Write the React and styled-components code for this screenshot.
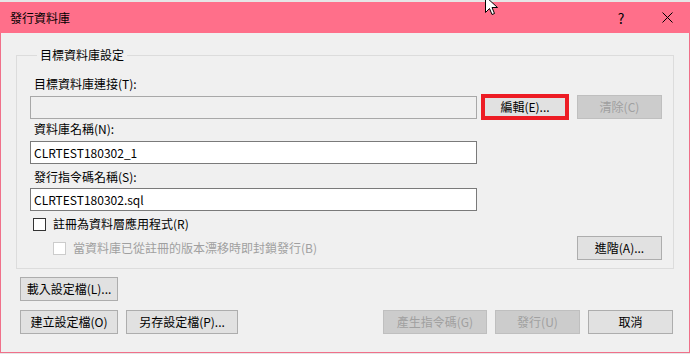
import React from 'react';
import styled, { createGlobalStyle } from 'styled-components';

const GlobalStyle = createGlobalStyle`
  html, body {
    margin: 0;
    padding: 0;
    background: #e6e6e6;
  }
  body {
    font-family: 'Noto Sans CJK TC', 'Noto Sans', sans-serif;
    font-size: 12px;
    color: #000;
  }
`;

const Window = styled.div`
  position: relative;
  margin-top: 2px;
  width: 688px;
  height: 350px;
  border: 1px solid #f0708a;
  border-top: none;
  background: #f0f0f0;
  display: flex;
  flex-direction: column;
`;

const TitleBar = styled.div`
  height: 31px;
  margin: 0 -1px;
  background: #ff6f8a;
  display: flex;
  align-items: center;
  padding-left: 10px;
  line-height: 16px;
`;

const Title = styled.span`
  flex: 1;
`;

const TitleButton = styled.div`
  width: 46px;
  height: 31px;
  display: flex;
  align-items: center;
  justify-content: center;
  font-size: 14px;
`;

const Body = styled.div`
  flex: 1;
  padding: 0 15px;
  display: flex;
  flex-direction: column;
`;

const Group = styled.fieldset`
  margin: 14px 0 0;
  padding: 13px 11px 8px 13px;
  border: 1px solid #dcdcdc;
  display: flex;
  flex-direction: column;
`;

const Legend = styled.legend`
  margin-left: 7px;
  padding: 0 3px;
  line-height: 16px;
`;

const Label = styled.div`
  margin: ${(p) => p.$top || 0}px 0 0 4px;
  line-height: 16px;
  height: 16px;
`;

const Row = styled.div`
  display: flex;
  align-items: center;
  gap: ${(p) => p.$gap || 0}px;
  margin-top: ${(p) => p.$top || 0}px;
`;

const TextBox = styled.div`
  box-sizing: border-box;
  width: 447px;
  height: 23px;
  margin-top: ${(p) => p.$top || 0}px;
  border: 1px solid ${(p) => (p.$disabled ? '#a8a8a8' : '#7a7a7a')};
  background: ${(p) => (p.$disabled ? '#f0f0f0' : '#fff')};
  padding-left: 3px;
  line-height: 21px;
`;

const Button = styled.button`
  box-sizing: border-box;
  width: ${(p) => p.$w}px;
  height: 24px;
  padding: 0;
  font: inherit;
  line-height: 16px;
  color: #000;
  background: #e1e1e1;
  border: 1px solid #adadad;
  border-radius: 0;

  &:disabled {
    color: #a0a0a0;
    background: #cccccc;
    border-color: #bfbfbf;
  }
`;

const Highlighted = styled(Button)`
  height: 26px;
  border: 4px solid #ed1c24;
  margin-left: 4px;
  margin-right: 8px;
`;

const Check = styled.span`
  box-sizing: border-box;
  width: 13px;
  height: 13px;
  margin-left: ${(p) => p.$left}px;
  border: 1px solid ${(p) => (p.$disabled ? '#cccccc' : '#333')};
  background: #fff;
  flex: none;
`;

const CheckLabel = styled.span`
  margin-left: 7px;
  line-height: 16px;
  color: ${(p) => (p.$disabled ? '#a0a0a0' : '#000')};
  flex: ${(p) => (p.$grow ? 1 : 'none')};
`;

const Footer = styled.div`
  display: flex;
  flex-direction: column;
  padding: 8px 1px 0 4px;
  gap: 9px;
`;

const Spacer = styled.div`
  flex: 1;
`;

const Cursor = styled.svg`
  position: absolute;
  left: 484px;
  top: -6px;
`;

export default function App() {
  return (
    <>
      <GlobalStyle />
      <Window>
        <TitleBar>
          <Title>發行資料庫</Title>
          <TitleButton>?</TitleButton>
          <TitleButton>
            <svg width="11" height="11" viewBox="0 0 11 11">
              <path d="M0.5 0.5L10.5 10.5M10.5 0.5L0.5 10.5" stroke="#000" strokeWidth="1" />
            </svg>
          </TitleButton>
        </TitleBar>
        <Body>
          <Group>
            <Legend>目標資料庫設定</Legend>
            <Label>目標資料庫連接(T):</Label>
            <Row $top={2}>
              <TextBox $disabled />
              <Highlighted $w={88}>編輯(E)...</Highlighted>
              <Button $w={85} disabled>清除(C)</Button>
            </Row>
            <Label $top={1}>資料庫名稱(N):</Label>
            <TextBox $top={4}>CLRTEST180302_1</TextBox>
            <Label $top={5}>發行指令碼名稱(S):</Label>
            <TextBox $top={3}>CLRTEST180302.sql</TextBox>
            <Row $top={5}>
              <Check $left={3} />
              <CheckLabel>註冊為資料層應用程式(R)</CheckLabel>
            </Row>
            <Row $top={4}>
              <Check $left={23} $disabled />
              <CheckLabel $disabled $grow>當資料庫已從註冊的版本漂移時即封鎖發行(B)</CheckLabel>
              <Button $w={85}>進階(A)...</Button>
            </Row>
          </Group>
          <Footer>
            <Row>
              <Button $w={98}>載入設定檔(L)...</Button>
            </Row>
            <Row $gap={8}>
              <Button $w={98}>建立設定檔(O)</Button>
              <Button $w={112}>另存設定檔(P)...</Button>
              <Spacer />
              <Button $w={104} disabled>產生指令碼(G)</Button>
              <Button $w={85} disabled>發行(U)</Button>
              <Button $w={85}>取消</Button>
            </Row>
          </Footer>
        </Body>
        <Cursor width="14" height="22" viewBox="0 0 14 22">
          <path d="M0.5 0.5V16.5L4.5 12.5L7 18.5L9.5 17.5L7 11.5H12.5Z" fill="#fff" stroke="#000" strokeWidth="1" strokeLinejoin="round" />
        </Cursor>
      </Window>
    </>
  );
}
